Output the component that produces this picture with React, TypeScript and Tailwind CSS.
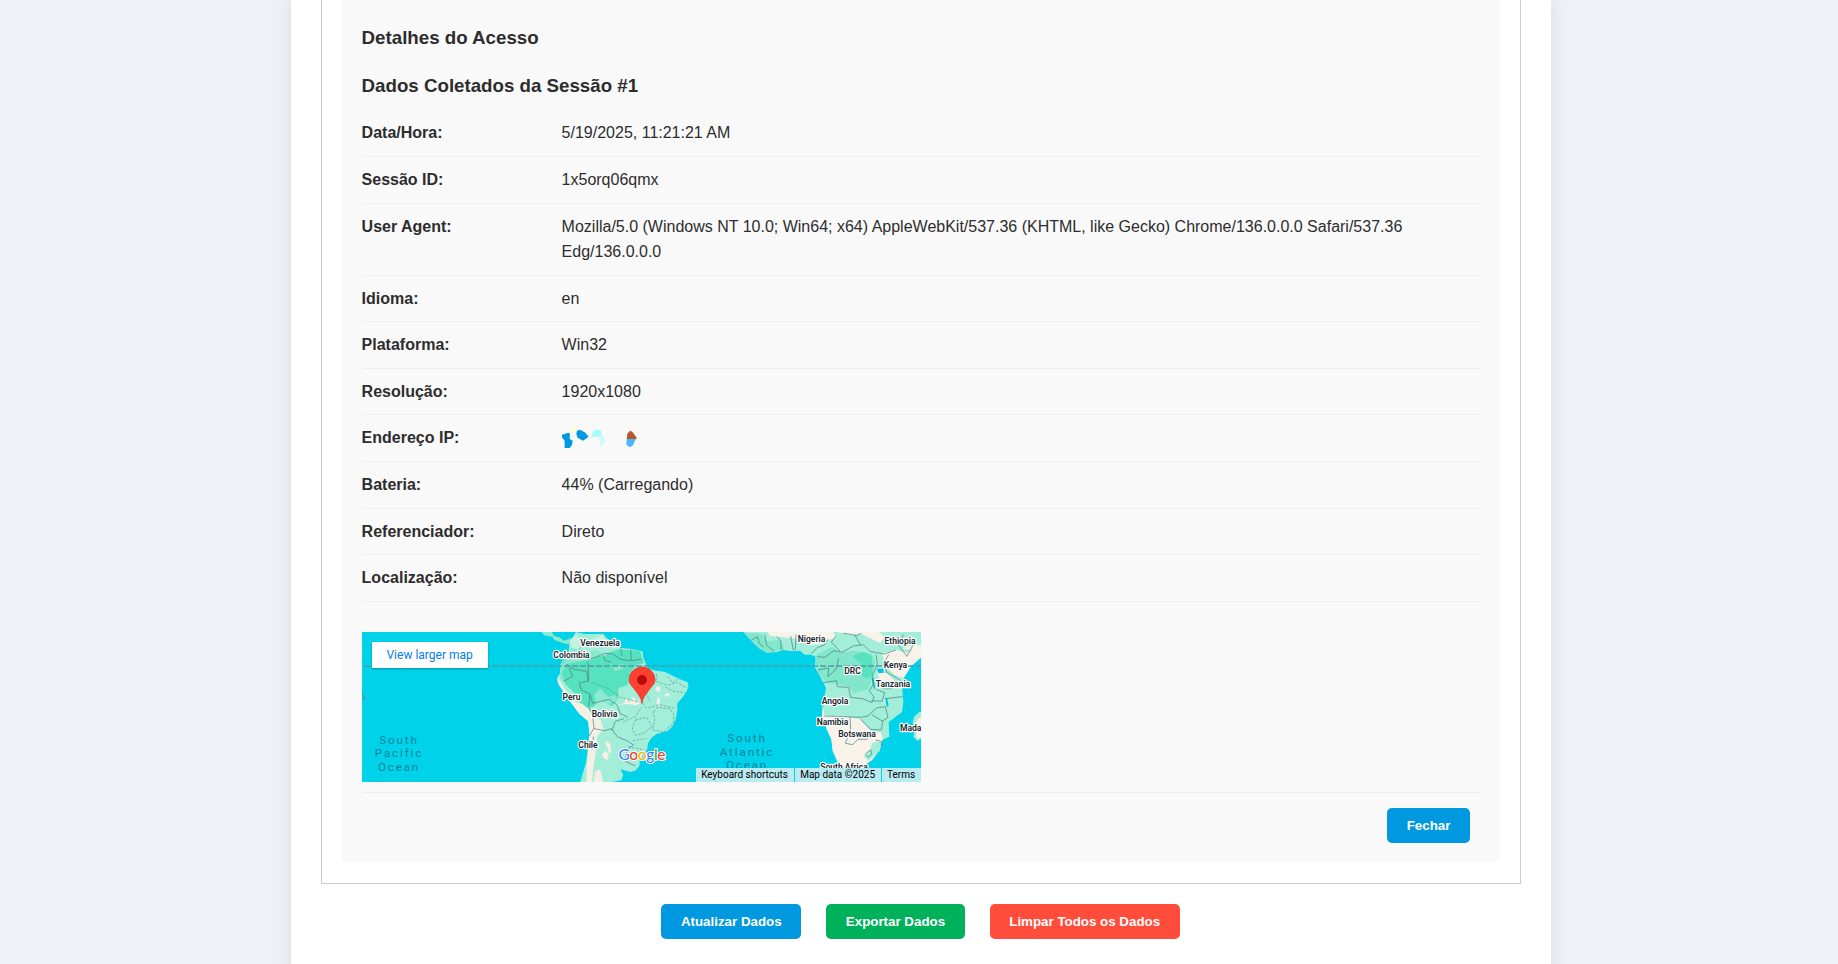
import type { ReactNode } from "react";

function CensoredIp() {
  return (
    <svg width="80" height="23" viewBox="0 -2 240 69" className="block">
      <path d="M26 8 L34 0 L48 13 L46 21 L26 22 Z" fill="#fbfbdc" />
      <path d="M0 27 L19 21 L24 24 L23 40 L32 45 L30 58 L23 67 L8 67 L8 46 L0 35 Z" fill="#0099e0" />
      <path d="M45 15 L54 12 L68 20 L80 33 L63 45 L47 36 L43 24 Z" fill="#0099e0" />
      <path d="M87 34 L96 13 L116 12 L119 33 Z" fill="#a4fdfd" />
      <path d="M111 34 L119 27 L131 42 L127 54 L115 63 Z" fill="#cffcfa" />
      <path d="M194 40 L196 24 L204 15 L211 18 L225 38 L221 41 Z" fill="#b6582c" />
      <path d="M194 40 L221 40 L213 59 L204 65 L193 57 Z" fill="#47b8ff" />
    </svg>
  );
}

const rows: [string, ReactNode][] = [
  ["Data/Hora:", "5/19/2025, 11:21:21 AM"],
  ["Sessão ID:", "1x5orq06qmx"],
  [
    "User Agent:",
    "Mozilla/5.0 (Windows NT 10.0; Win64; x64) AppleWebKit/537.36 (KHTML, like Gecko) Chrome/136.0.0.0 Safari/537.36 Edg/136.0.0.0",
  ],
  ["Idioma:", "en"],
  ["Plataforma:", "Win32"],
  ["Resolução:", "1920x1080"],
  ["Endereço IP:", <CensoredIp key="ip" />],
  ["Bateria:", "44% (Carregando)"],
  ["Referenciador:", "Direto"],
  ["Localização:", "Não disponível"],
];

const countries: [string, number, number][] = [
  ["Venezuela", 238, 14],
  ["Colombia", 209.5, 26],
  ["Peru", 209.5, 68],
  ["Bolivia", 242.5, 85],
  ["Chile", 226, 116],
  ["Nigeria", 449.5, 10],
  ["Ethiopia", 538, 12],
  ["Kenya", 533.5, 36],
  ["DRC", 490.5, 42],
  ["Tanzania", 531, 55],
  ["Angola", 473, 72],
  ["Namibia", 470.5, 93],
  ["Botswana", 495, 105],
  ["South Africa", 482, 138],
];

const oceans: [string, number, number][] = [
  ["South", 37, 112],
  ["Pacific", 37, 125],
  ["Ocean", 37, 139],
  ["South", 385, 110],
  ["Atlantic", 385, 124],
  ["Ocean", 385, 137],
];

function MapDrawing() {
  return (
    <svg width="559" height="150" viewBox="0 0 559 150" className="block" fontFamily="Roboto, sans-serif">
      <rect width="559" height="150" fill="#00d2ea" />
      <g transform="translate(178 -12) scale(.33333)">
        <path d="M5 36 L36 36 L42 48 L58 52 L72 62 L86 58 L90 48 L88 72 L78 72 L60 66 L44 60 L36 50 L12 46 Z" fill="#8ce8cf" />
        <path d="M108 36 L132 42 L190 42 L200 54 L242 84 L270 86 L308 94 L310 112 L318 132 L324 146 L350 152 L375 156 L392 164 L420 178 L442 186 L446 198 L440 214 L428 232 L412 250 L412 270 L407 298 L398 318 L384 332 L350 342 L334 354 L324 370 L322 386 L312 404 L300 418 L298 438 L286 452 L270 456 L242 448 L250 466 L244 480 L208 488 L120 488 L128 462 L138 428 L144 380 L148 336 L144 300 L120 280 L94 250 L76 224 L54 190 L52 172 L60 160 L60 134 L76 112 L86 98 L88 68 L98 52 Z" fill="#a3eed9" />
        <path d="M62 134 L84 106 L130 118 L160 100 L188 110 L210 96 L236 88 L300 92 L312 130 L290 134 L270 160 L262 196 L236 204 L234 238 L216 258 L180 240 L158 262 L134 262 L114 240 L100 216 L76 192 L62 162 Z" fill="#57e2bf" />
        <path d="M84 112 L98 76 L120 80 L122 110 L164 90 L186 98 L160 118 L120 124 L80 132 L64 160 L74 184 L60 176 L60 142 Z" fill="#88e7cd" />
        <path d="M88 60 L108 46 L124 62 L116 88 L96 84 Z M160 54 L188 46 L196 60 L170 66 Z" fill="#c6f3e1" />
        <path d="M164 222 L180 206 L206 232 L224 224 L232 240 L206 254 L184 244 L168 252 Z M210 132 L230 142 L252 130 L248 146 L226 154 Z" fill="#8ce9d0" />
        <path d="M52 172 L66 192 L78 214 L98 244 L128 252 L150 272 L164 290 L182 300 L190 328 L172 348 L168 392 L160 444 L156 488 L140 488 L140 440 L146 380 L148 332 L144 304 L118 282 L94 250 L76 224 L54 190 Z" fill="#f6f0e4" />
        <path d="M186 404 L196 392 L206 402 L204 420 L192 416 Z M194 372 L204 362 L212 376 L214 400 L206 398 L202 380 Z M164 456 L180 448 L190 486 L162 487 Z M234 254 L252 250 L258 234 L268 248 L280 230 L292 246 L300 238 L304 250 L286 256 L262 252 Z M346 206 L352 198 L360 202 L362 212 L352 216 Z M352 232 L360 236 L358 260 L350 252 Z M372 224 L384 218 L390 224 L380 232 Z" fill="#f6f0e4" />
        <g fill="none" stroke="#49787a" strokeWidth="2.5" opacity=".8">
          <path d="M78 132 L102 148 L140 154 L144 184 L118 188 L124 210 L150 222 L158 250 L182 244 L208 238 L232 256 L240 280 L264 292" />
          <path d="M118 86 L144 118 L166 112 L194 100 L218 102 L242 118 L272 122 L304 118 M146 184 L144 126 M188 104 L196 122 L214 126 M242 86 L246 108 M272 88 L274 120" />
          <path d="M88 144 L98 170 L70 184 M150 222 L146 260 L158 288 L162 324 L148 348 M162 326 L194 332 L214 326 L232 350 L260 362 L280 374 L260 392 L256 424 L286 438 M216 332 L226 304 L252 296 M156 390 L160 350" />
        </g>
        <g fill="none" stroke="#4c8889" strokeWidth="2" strokeDasharray="8 4" opacity=".85">
          <path d="M154 188 L206 206 L240 232 L306 248 L320 264 L360 254 L402 264 M318 152 L332 188 L318 218 L330 244 M350 162 L348 184 L382 196 L410 188 L442 204 M382 170 L398 188 L414 178 M376 202 L402 214 L436 218 M248 306 L286 290 L304 262 M340 276 L352 262 L390 266 L402 286 L400 310 L370 336 L338 330 L344 298 Z M286 300 L320 292 L336 320 L314 338 L288 346 L276 330 Z M278 362 L318 356 M264 380 L306 388" />
        </g>
      </g>
      <g transform="translate(328 -12) scale(.33333)">
        <path d="M160 36 L372 36 L694 36 L694 112 L664 138 L642 174 L636 202 L640 246 L636 276 L596 306 L598 350 L576 360 L570 390 L546 420 L504 448 L458 448 L442 424 L428 392 L424 358 L410 328 L398 288 L402 240 L408 204 L398 184 L384 158 L374 140 L378 110 L362 104 L344 104 L330 92 L306 94 L280 90 L262 96 L230 98 L206 84 L184 62 Z" fill="#a3eed9" />
        <path d="M164 38 L214 42 L230 64 L270 60 L284 88 L230 98 L206 84 L184 62 Z M374 108 L426 80 L450 98 L488 92 L544 100 L556 128 L548 164 L536 208 L490 220 L476 198 L410 188 L384 160 Z M436 100 L452 120 L440 134 Z" fill="#82e6cb" />
        <path d="M486 108 L520 96 L546 108 L548 166 L530 176 L512 164 L518 136 Z" fill="#57e2bf" />
        <path d="M232 36 L430 36 L438 54 L412 60 L396 72 L366 74 L330 58 L280 52 L240 48 Z M440 36 L568 36 L584 52 L570 70 L548 58 L514 42 L486 46 L460 40 Z M576 100 L618 90 L650 98 L694 80 L694 112 L664 138 L640 174 L612 164 L590 142 Z M562 158 L590 160 L612 180 L604 198 L572 188 Z M636 86 L676 72 L694 76 L694 92 Z M398 252 L404 286 L480 292 L514 298 L540 324 L572 330 L578 358 L568 390 L546 420 L504 448 L458 448 L442 424 L428 392 L424 358 L410 328 L396 288 Z" fill="#f9f2e8" />
        <path d="M546 368 L574 364 L568 394 L536 422 L522 410 L540 390 Z M510 298 L552 286 L580 300 L590 340 L542 332 Z" fill="#a3eed9" />
        <path d="M672 290 L688 276 L694 276 L694 356 L682 362 L670 350 L676 326 L668 310 Z" fill="#a3eed9" />
        <path d="M680 300 L694 290 L694 352 L680 356 Z" fill="#f9f2e8" />
        <path d="M560 146 L580 146 L580 158 L566 160 Z M544 172 L550 174 L556 204 L552 208 Z M586 232 L592 236 L596 258 L590 260 Z" fill="#00c3e2" />
        <g fill="none" stroke="#45797b" strokeWidth="2.5" opacity=".8">
          <path d="M184 60 L202 50 L208 70 L222 82 M224 44 L230 76 L252 94 M260 50 L272 62 L274 90 M302 48 L310 92 M318 44 L316 90 M364 102 L382 82 L402 76 L414 58 M382 110 L404 112 L432 92 L452 96 L424 66 L438 48 M454 98 L490 78 L520 74 L540 94 L560 98 L584 102 L618 90 M494 44 L512 76 M460 40 L500 46 L514 40" />
          <path d="M384 150 L416 144 L414 170 L438 148 L446 114 M400 188 L440 182 L442 200 L476 202 L482 232 L518 236 L546 248 L552 230 L538 214 L550 192 L548 164 L562 132 L558 104 M596 104 L582 128 L590 156 L636 184 M580 206 L606 206 M586 236 L638 230 M544 242 L576 244 L584 218 L558 208 M402 288 L512 292 L534 288 L560 264 L586 260 L594 292 L576 304 M480 292 L482 330 L466 370 L488 374 L504 358 L530 358 L556 334 M512 298 L542 328 L574 330 L578 304 L546 284 M650 108 L624 74 L640 44 M670 74 L650 110" />
          <path d="M532 396 L542 390 L546 402 L534 412 L526 404 Z M556 360 L574 364 L574 378" />
        </g>
      </g>
      <path d="M2 34 H559" stroke="#4f9aa8" strokeWidth="1.7" strokeDasharray="6 2" fill="none" />
      <path d="M0 62 L3 68 M0 67 L1 68" stroke="#56818f" strokeWidth="1" fill="none" />
      <g fontSize="11.5" fill="#078298" letterSpacing="1.9" textAnchor="middle">
        {oceans.map(([name, x, y]) => (
          <text key={name + x} x={x} y={y}>
            {name}
          </text>
        ))}
      </g>
      <g fontSize="8.5" fontWeight="600" fill="#17252a" stroke="#fff" strokeWidth="2.4" strokeLinejoin="round" paintOrder="stroke" textAnchor="middle">
        {countries.map(([name, x, y]) => (
          <text key={name} x={x} y={y}>
            {name}
          </text>
        ))}
        <text x="538" y="99" textAnchor="start">
          Mada
        </text>
      </g>
      <path d="M280 71.5 C279.4 66 276.6 62.8 273.2 58.2 C269.4 53 267 51.8 267 48 A13 13 0 0 1 293 48 C293 51.8 290.6 53 286.8 58.2 C283.4 62.8 280.6 66 280 71.5 Z" fill="#ff4131" stroke="#d63328" strokeWidth=".7" />
      <circle cx="280" cy="48" r="5" fill="#b90d0d" />
      <text x="256.5" y="127.5" fontFamily="Lato, sans-serif" fontSize="15.5" fontWeight="500" stroke="#fff" strokeWidth="2" paintOrder="stroke" strokeLinejoin="round" textLength="47">
        <tspan fill="#3f83ee">G</tspan>
        <tspan fill="#ed4339">o</tspan>
        <tspan fill="#f6b90c">o</tspan>
        <tspan fill="#3f83ee">g</tspan>
        <tspan fill="#32a853">l</tspan>
        <tspan fill="#ed4339">e</tspan>
      </text>
    </svg>
  );
}

function LocationMap() {
  return (
    <div className="relative h-[150px] w-[559px] overflow-hidden font-[Roboto,sans-serif]">
      <MapDrawing />
      <div className="absolute top-[10px] left-[10px] flex h-[26px] w-[116px] items-center justify-center bg-white pt-px text-[12px] text-[#0080e8] shadow-[0_1px_2px_rgba(0,0,0,0.3)]">
        View larger map
      </div>
      <div className="absolute right-0 bottom-0 flex h-[14px] gap-px text-[10px] leading-[14px] whitespace-nowrap text-black">
        <span className="w-[98px] bg-[#b9ebf2] text-center">Keyboard shortcuts</span>
        <span className="w-[86px] bg-[#b9ebf2] text-center">Map data ©2025</span>
        <span className="w-[39px] bg-[#b9ebf2] text-center">Terms</span>
      </div>
    </div>
  );
}

function Button({ color, children }: { color: string; children: ReactNode }) {
  return (
    <button
      className={`h-[35px] rounded-[5px] px-[19.6px] text-[13.333px] leading-[15px] font-bold whitespace-nowrap text-white ${color}`}
    >
      {children}
    </button>
  );
}

export default function App() {
  return (
    <div className="flex h-[964px] justify-center overflow-hidden bg-[#eff1f6] pl-[4px] font-['Liberation_Sans',Arial,sans-serif] text-[16px] leading-[25.6px] text-[#2d2d2d]">
      <main className="h-[1000px] w-[1260px] bg-white px-[30px] shadow-[0_0_15px_rgba(0,50,70,0.1)]">
        <section className="h-[884px] border border-t-0 border-[#ccc] px-5 pb-5">
          <div className="h-[863px] rounded-b-[5px] bg-[#f9f9f9] pt-[22.7px] pr-5 pl-[19.6px]">
            <h3 className="text-[18.72px] leading-[29.95px] font-bold">Detalhes do Acesso</h3>
            <h3 className="mt-[18.72px] mb-[9px] text-[18.72px] leading-[29.95px] font-bold">
              Dados Coletados da Sessão #1
            </h3>
            <dl>
              {rows.map(([label, value]) => (
                <div key={label} className="flex h-auto border-b border-[#eee] py-[10px]">
                  <dt className="w-[200px] shrink-0 font-bold">{label}</dt>
                  <dd className="min-h-[25.6px] flex-1">{value}</dd>
                </div>
              ))}
            </dl>
            <div className="mt-5 border-b border-[#eee] py-[10px]">
              <LocationMap />
            </div>
            <div className="mt-[15px] flex justify-end pr-[10px]">
              <Button color="bg-[#0099e0]">Fechar</Button>
            </div>
          </div>
        </section>
        <div className="mt-5 flex justify-center gap-[25px] pr-px">
          <Button color="bg-[#0099e0]">Atualizar Dados</Button>
          <Button color="bg-[#00b15c]">Exportar Dados</Button>
          <Button color="bg-[#ff4c3b]">Limpar Todos os Dados</Button>
        </div>
      </main>
    </div>
  );
}
